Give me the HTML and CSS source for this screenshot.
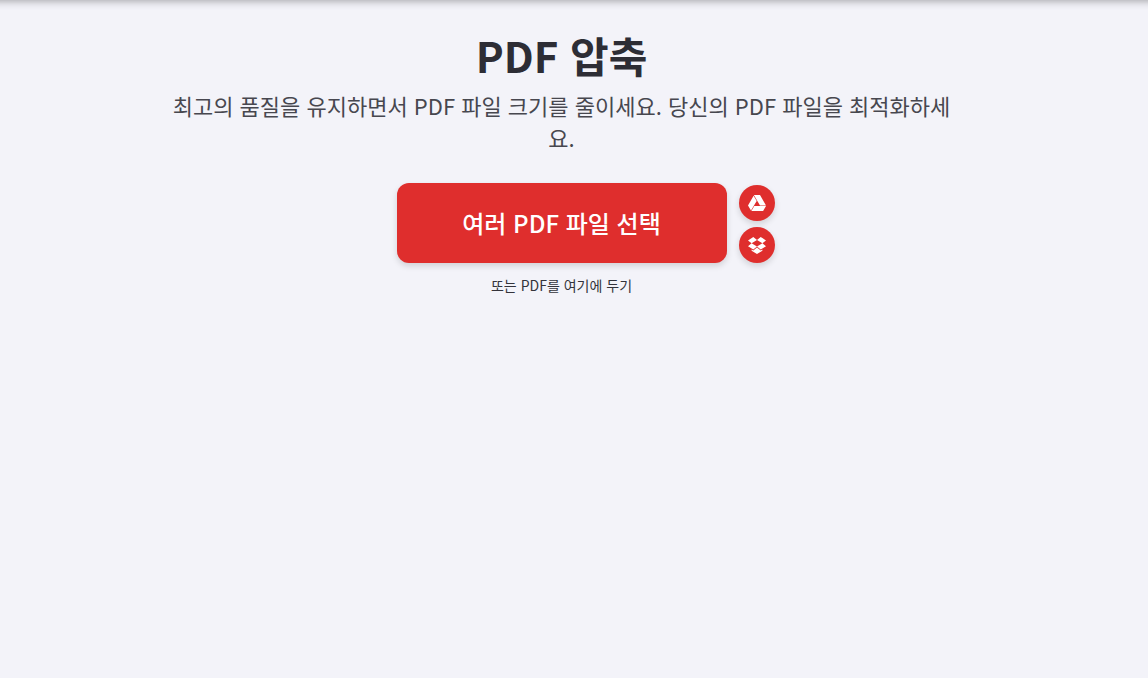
FILE: index.html
```html
<!DOCTYPE html>
<html lang="ko">
<head>
    <meta charset="UTF-8">
    <title>PDF 압축</title>
    <link rel="stylesheet" href="styles.css">
</head>
<body>
<div class="header"></div>
<main class="tool">
    <h1 class="tool-title">PDF 압축</h1>
    <h2 class="tool-subtitle">최고의 품질을 유지하면서 PDF 파일 크기를 줄이세요. 당신의 PDF 파일을 최적화하세요.</h2>
    <div class="uploader">
        <button class="uploader-btn">여러 PDF 파일 선택</button>
        <div class="uploader-extra">
            <a class="round-btn" title="Google Drive">
                <svg width="18" height="16" viewBox="0 0 18 16"><path fill="#fff" d="M6 0h6l6 10.600h-6L6 .3zM5.600.7L8.700 6 3 15.600 0 10.500zM6.300 11H18L15.100 16H3.400z"/></svg>
            </a>
            <a class="round-btn" title="Dropbox">
                <svg width="18" height="17" viewBox="0 0 18 17"><path fill="#fff" d="M5.300 0L9 3l3.700-3L18 3.400 14.400 6.300 18 9.200l-5.300 3.400L9 9.500l-3.700 3.100L0 9.200l3.600-2.900L0 3.400zM9 3L3.600 6.300 9 9.500l5.400-3.200zM3.600 12.500l1.700 1L9 10.400l3.700 3.100 1.700-1v1.300L9 17l-5.400-3.200z"/></svg>
            </a>
        </div>
    </div>
    <p class="drop-text">또는 PDF를 여기에 두기</p>
</main>
</body>
</html>
```
FILE: styles.css
```css
body {
    margin: 0;
    min-height: 678px;
    background: #f3f3f9;
    color: #33333b;
    font-family: "Noto Sans CJK KR", sans-serif;
    overflow: hidden;
}

.header {
    height: 10px;
    margin: -10px -10px 0;
    background: #fff;
    box-shadow: 0 0 10px rgba(0, 0, 0, 0.42);
}

.tool {
    width: 800px;
    margin-left: 161.5px;
    padding-top: 28.5px;
    text-align: center;
}

.tool-title {
    margin: 0;
    font-size: 42px;
    line-height: 52px;
    font-weight: 700;
    color: #2d2d35;
}

.tool-subtitle {
    margin: 8.5px 0 0;
    font-size: 22px;
    line-height: 32px;
    font-weight: 400;
    color: #47474f;
}

.uploader {
    display: flex;
    gap: 12px;
    width: 378px;
    margin: 30px 0 0 235.5px;
}

.uploader-btn {
    width: 330px;
    height: 80px;
    padding: 0 1px 2px 0;
    border: 0;
    border-radius: 12px;
    background: #df2e2d;
    color: #fff;
    font-family: inherit;
    font-size: 24px;
    font-weight: 500;
    box-shadow: 0 3px 6px rgba(0, 0, 0, 0.14);
}

.uploader-extra {
    display: flex;
    flex-direction: column;
    gap: 6px;
    padding-top: 2px;
}

.round-btn {
    display: flex;
    align-items: center;
    justify-content: center;
    width: 36px;
    height: 36px;
    border-radius: 50%;
    background: #df2e2d;
    box-shadow: 0 3px 6px rgba(0, 0, 0, 0.14);
}

.drop-text {
    margin: 12px 0 0;
    font-size: 14px;
    line-height: 20px;
}
```
